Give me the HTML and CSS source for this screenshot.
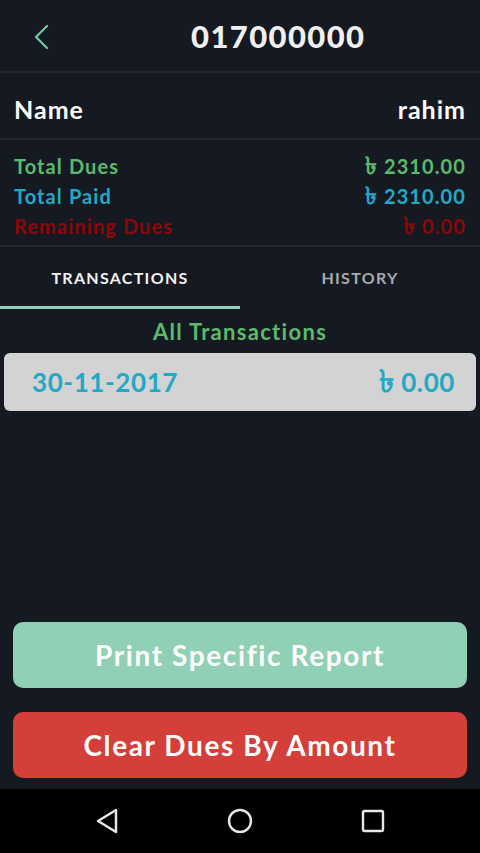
FILE: index.html
```html
<!DOCTYPE html>
<html>
<head>
<meta charset="utf-8">
<link rel="stylesheet" href="styles.css">
</head>
<body>
<div class="screen">
  <header class="topbar">
    <span class="back">
      <svg width="16" height="26" viewBox="0 0 16 26"><path d="M14 2 L3 13 L14 24" fill="none" stroke="#6cc9a0" stroke-width="2.2" stroke-linecap="round" stroke-linejoin="round"/></svg>
    </span>
    <h1 class="title">017000000</h1>
  </header>
  <div class="name-row">
    <span>Name</span>
    <span>rahim</span>
  </div>
  <div class="totals">
    <div class="trow green"><span>Total Dues</span><span><span class="tk">৳</span> 2310.00</span></div>
    <div class="trow cyan"><span>Total Paid</span><span><span class="tk">৳</span> 2310.00</span></div>
    <div class="trow red"><span>Remaining Dues</span><span><span class="tk">৳</span> 0.00</span></div>
  </div>
  <nav class="tabs">
    <div class="tab active">TRANSACTIONS</div>
    <div class="tab">HISTORY</div>
  </nav>
  <main class="content">
    <div class="section-title">All Transactions</div>
    <div class="card"><span>30-11-2017</span><span><span class="tk">৳</span> 0.00</span></div>
    <div class="spacer"></div>
    <div class="btn mint">Print Specific Report</div>
    <div class="btn redbtn">Clear Dues By Amount</div>
  </main>
  <footer class="navbar">
    <span class="navkey"><svg width="24" height="28" viewBox="0 0 24 28"><path d="M21 3 L3 14 L21 25 Z" fill="none" stroke="#e8e8e8" stroke-width="2.4" stroke-linejoin="round"/></svg></span>
    <span class="navkey"><svg width="26" height="26" viewBox="0 0 26 26"><circle cx="13" cy="13" r="11" fill="none" stroke="#e8e8e8" stroke-width="2.4"/></svg></span>
    <span class="navkey"><svg width="24" height="24" viewBox="0 0 24 24"><rect x="2" y="2" width="20" height="20" rx="1.5" fill="none" stroke="#e8e8e8" stroke-width="2.4"/></svg></span>
  </footer>
</div>
</body>
</html>
```
FILE: styles.css
```css
* { box-sizing: border-box; margin: 0; padding: 0; }
html, body { width: 480px; height: 853px; }
body { background: #151922; font-family: Lato, "Noto Sans", "DejaVu Sans", sans-serif; font-weight: 700; }
.screen { display: flex; flex-direction: column; height: 853px; }
.topbar { height: 73px; display: flex; align-items: center; padding-left: 191px; position: relative; border-bottom: 2px solid #222731; }
.back { position: absolute; left: 33px; top: 24px; }
.title { color: #f0f0f0; font-size: 31px; font-weight: 900; letter-spacing: 1.4px; padding-top: 1px; }
.name-row { height: 67px; display: flex; justify-content: space-between; align-items: center; padding: 6px 14px 0; color: #fff; font-size: 25px; letter-spacing: 1px; border-bottom: 2px solid #222731; }
.totals { height: 107px; display: flex; flex-direction: column; justify-content: center; padding: 6px 14px 0; border-bottom: 2px solid #222731; }
.trow { display: flex; justify-content: space-between; font-size: 20px; letter-spacing: 1.1px; height: 30px; align-items: baseline; line-height: 30px; }
.tk { font-size: 1.2em; line-height: 0; font-weight: 700; }
.green { color: #5cba6b; }
.cyan { color: #21a9c7; }
.red { color: #8c0707; }
.tabs { display: flex; height: 62px; }
.tab { flex: 1; display: flex; align-items: center; justify-content: center; color: #a9aaad; font-size: 16px; letter-spacing: 1.3px; border-bottom: 3px solid transparent; padding-top: 1px; }
.tab.active { color: #f2f2f2; border-bottom-color: #8fd1b4; }
.content { flex: 1; display: flex; flex-direction: column; padding: 0 4px 11px; }
.section-title { color: #5cba6b; font-size: 22px; letter-spacing: 1.3px; text-align: center; height: 44px; display: flex; align-items: center; justify-content: center; }
.card { background: #d3d3d3; border-radius: 6px; height: 58px; display: flex; justify-content: space-between; align-items: baseline; line-height: 58px; padding: 0 21px 0 28px; color: #21a9c7; font-size: 26px; letter-spacing: 0.6px; }
.spacer { flex: 1; }
.btn { margin: 0 9px; height: 66px; border-radius: 10px; color: #fff; font-size: 28px; display: flex; align-items: center; justify-content: center; letter-spacing: 1.6px; }
.mint { background: #90d1b6; margin-bottom: 24px; }
.redbtn { background: #d43f3a; }
.navbar { height: 64px; background: #000; display: flex; align-items: center; justify-content: center; }
.navkey { width: 133px; display: flex; justify-content: center; align-items: center; }
```
